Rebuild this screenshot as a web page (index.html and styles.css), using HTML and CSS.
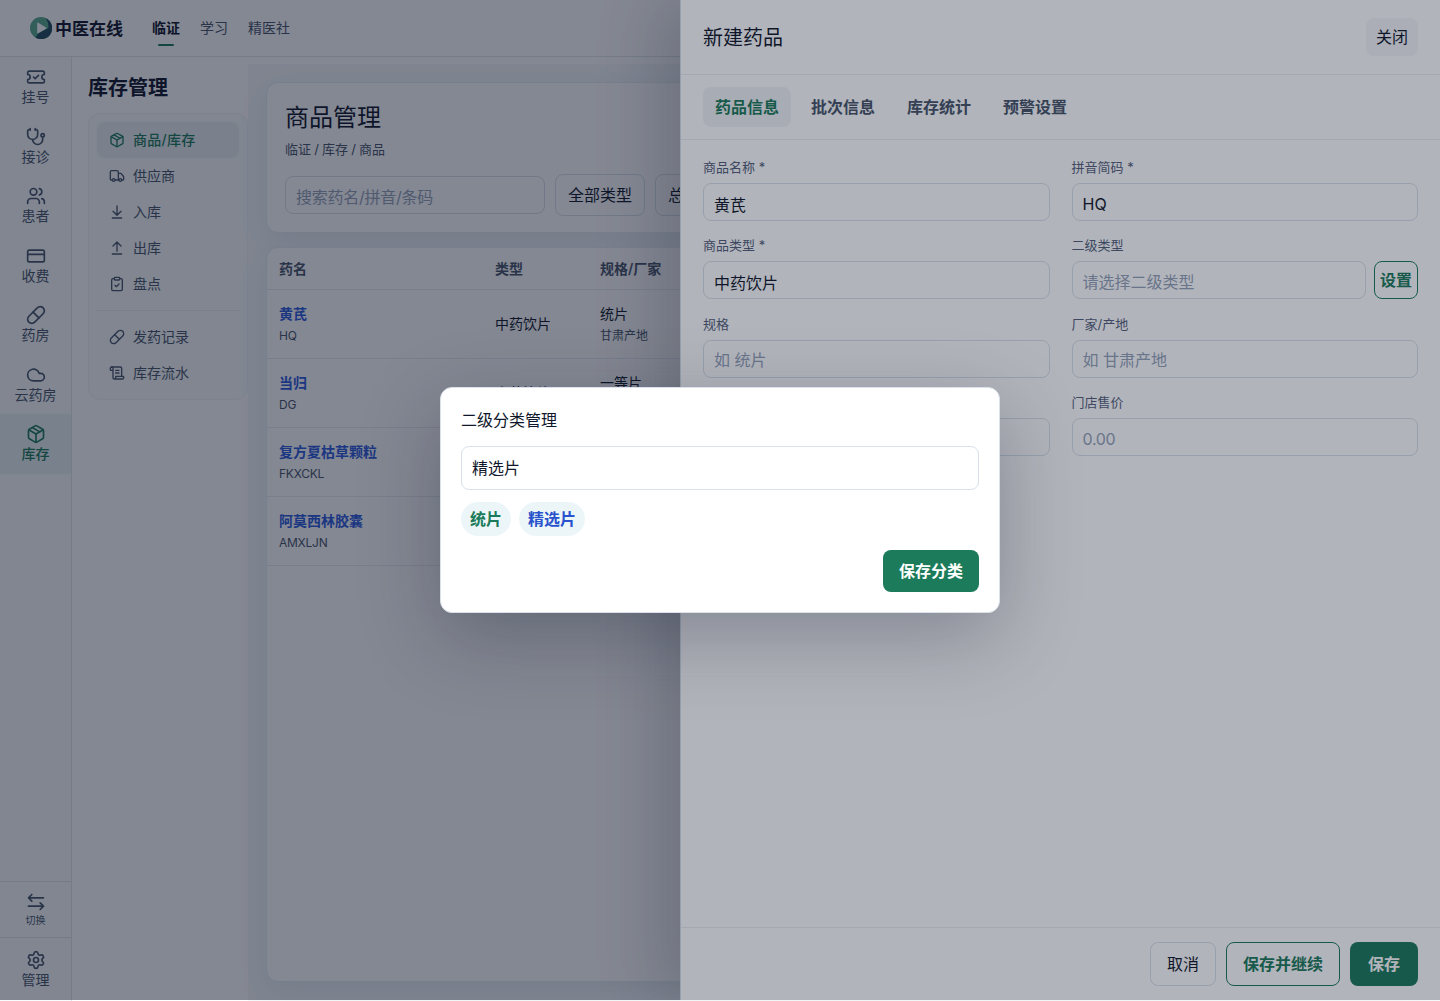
FILE: index.html
```html
<!DOCTYPE html>
<html lang="zh-CN">
<head>
    <meta charset="UTF-8">
    <meta name="viewport" content="width=device-width, initial-scale=1.0">
    <title>中医在线 - 库存管理</title>
    <link rel="stylesheet" href="styles.css">
</head>
<body>
    <!-- 图标 -->
    <svg class="icon-defs" width="0" height="0">
        <symbol id="i-ticket" viewBox="0 0 24 24"><path d="M2 9a3 3 0 1 1 0 6v2a2 2 0 0 0 2 2h16a2 2 0 0 0 2-2v-2a3 3 0 1 1 0-6V7a2 2 0 0 0-2-2H4a2 2 0 0 0-2 2Z"/><path d="m9 12 2 2 4-4"/></symbol>
        <symbol id="i-stethoscope" viewBox="0 0 24 24"><path d="M11 2v2M5 2v2M5 3H4a2 2 0 0 0-2 2v4a6 6 0 0 0 12 0V5a2 2 0 0 0-2-2h-1"/><path d="M8 15a6 6 0 0 0 12 0v-3"/><circle cx="20" cy="10" r="2"/></symbol>
        <symbol id="i-users" viewBox="0 0 24 24"><path d="M16 21v-2a4 4 0 0 0-4-4H6a4 4 0 0 0-4 4v2"/><circle cx="9" cy="7" r="4"/><path d="M22 21v-2a4 4 0 0 0-3-3.87M16 3.13a4 4 0 0 1 0 7.75"/></symbol>
        <symbol id="i-card" viewBox="0 0 24 24"><rect x="2" y="5" width="20" height="14" rx="2"/><path d="M2 10h20"/></symbol>
        <symbol id="i-pill" viewBox="0 0 24 24"><path d="m10.5 20.5 10-10a4.95 4.95 0 1 0-7-7l-10 10a4.95 4.95 0 1 0 7 7Z"/><path d="m8.5 8.5 7 7"/></symbol>
        <symbol id="i-cloud" viewBox="0 0 24 24"><path d="M17.5 19H9a7 7 0 1 1 6.71-9h1.79a4.5 4.5 0 1 1 0 9Z"/></symbol>
        <symbol id="i-package" viewBox="0 0 24 24"><path d="M11 21.73a2 2 0 0 0 2 0l7-4A2 2 0 0 0 21 16V8a2 2 0 0 0-1-1.73l-7-4a2 2 0 0 0-2 0l-7 4A2 2 0 0 0 3 8v8a2 2 0 0 0 1 1.73z"/><path d="M12 22V12"/><path d="M3.29 7 12 12l8.71-5"/><path d="m7.5 4.27 9 5.15"/></symbol>
        <symbol id="i-truck" viewBox="0 0 24 24"><path d="M14 18V6a2 2 0 0 0-2-2H4a2 2 0 0 0-2 2v11a1 1 0 0 0 1 1h2"/><path d="M15 18H9"/><path d="M19 18h2a1 1 0 0 0 1-1v-3.65a1 1 0 0 0-.22-.624l-3.48-4.35A1 1 0 0 0 17.52 8H14"/><circle cx="17" cy="18" r="2"/><circle cx="7" cy="18" r="2"/></symbol>
        <symbol id="i-in" viewBox="0 0 24 24"><path d="M12 17V3M6 11l6 6 6-6M19 21H5"/></symbol>
        <symbol id="i-out" viewBox="0 0 24 24"><path d="m18 9-6-6-6 6M12 3v14M5 21h14"/></symbol>
        <symbol id="i-check" viewBox="0 0 24 24"><rect x="8" y="2" width="8" height="4" rx="1"/><path d="M16 4h2a2 2 0 0 1 2 2v14a2 2 0 0 1-2 2H6a2 2 0 0 1-2-2V6a2 2 0 0 1 2-2h2"/><path d="m9 14 2 2 4-4"/></symbol>
        <symbol id="i-scroll" viewBox="0 0 24 24"><path d="M15 12h-5M15 8h-5M19 17V5a2 2 0 0 0-2-2H4"/><path d="M8 21h12a2 2 0 0 0 2-2v-1a1 1 0 0 0-1-1H11a1 1 0 0 0-1 1v1a2 2 0 1 1-4 0V5a2 2 0 1 0-4 0v2a1 1 0 0 0 1 1h3"/></symbol>
        <symbol id="i-swap" viewBox="0 0 24 24"><path d="M7 3 3 7l4 4M3 7h18M17 13l4 4-4 4M21 17H3"/></symbol>
        <symbol id="i-gear" viewBox="0 0 24 24"><path d="M9.671 4.136a2.34 2.34 0 0 1 4.659 0 2.34 2.34 0 0 0 3.319 1.915 2.34 2.34 0 0 1 2.33 4.033 2.34 2.34 0 0 0 0 3.831 2.34 2.34 0 0 1-2.33 4.033 2.34 2.34 0 0 0-3.319 1.915 2.34 2.34 0 0 1-4.659 0 2.34 2.34 0 0 0-3.32-1.915 2.34 2.34 0 0 1-2.33-4.033 2.34 2.34 0 0 0 0-3.831A2.34 2.34 0 0 1 6.35 6.051a2.34 2.34 0 0 0 3.319-1.915"/><circle cx="12" cy="12" r="3"/></symbol>
    </svg>

    <div class="app">
        <header class="topbar">
            <div class="brand">
                <svg class="brand-logo" viewBox="0 0 22 22">
                    <circle cx="11" cy="11" r="11" fill="#58a98a"/>
                    <path d="M16 1.2A11 11 0 1 1 5.5 20.5L8 16.5 18.5 11Q18.5 5 16 1.2Z" fill="#1f4a5c"/>
                    <path d="M7.2 6.3v9.4q0 1.2 1 .6l7.8-4.5q1-.7 0-1.4L8.2 5.7q-1-.5-1 .6Z" fill="#fff"/>
                </svg>
                <span class="brand-name">中医在线</span>
            </div>
            <nav class="topnav">
                <a class="active">临证</a>
                <a>学习</a>
                <a>精医社</a>
            </nav>
        </header>

        <div class="body">
            <aside class="rail">
                <a class="rail-item"><svg class="icon"><use href="#i-ticket"/></svg><span>挂号</span></a>
                <a class="rail-item"><svg class="icon"><use href="#i-stethoscope"/></svg><span>接诊</span></a>
                <a class="rail-item"><svg class="icon"><use href="#i-users"/></svg><span>患者</span></a>
                <a class="rail-item"><svg class="icon"><use href="#i-card"/></svg><span>收费</span></a>
                <a class="rail-item"><svg class="icon"><use href="#i-pill"/></svg><span>药房</span></a>
                <a class="rail-item"><svg class="icon"><use href="#i-cloud"/></svg><span>云药房</span></a>
                <a class="rail-item active"><svg class="icon"><use href="#i-package"/></svg><span>库存</span></a>
                <div class="rail-bottom">
                    <a class="rail-item switch"><svg class="icon"><use href="#i-swap"/></svg><span>切换</span></a>
                    <a class="rail-item manage"><svg class="icon"><use href="#i-gear"/></svg><span>管理</span></a>
                </div>
            </aside>

            <aside class="side">
                <h2>库存管理</h2>
                <nav class="menu">
                    <a class="menu-item active"><svg class="icon"><use href="#i-package"/></svg>商品/库存</a>
                    <a class="menu-item"><svg class="icon"><use href="#i-truck"/></svg>供应商</a>
                    <a class="menu-item"><svg class="icon"><use href="#i-in"/></svg>入库</a>
                    <a class="menu-item"><svg class="icon"><use href="#i-out"/></svg>出库</a>
                    <a class="menu-item"><svg class="icon"><use href="#i-check"/></svg>盘点</a>
                    <div class="menu-line"></div>
                    <a class="menu-item"><svg class="icon"><use href="#i-pill"/></svg>发药记录</a>
                    <a class="menu-item"><svg class="icon"><use href="#i-scroll"/></svg>库存流水</a>
                </nav>
            </aside>

            <main class="main">
                <section class="card page-head">
                    <h1>商品管理</h1>
                    <div class="crumb">临证 / 库存 / 商品</div>
                    <div class="toolbar">
                        <input class="input search" type="text" placeholder="搜索药名/拼音/条码">
                        <button class="btn filter">全部类型</button>
                        <button class="btn filter">总库存</button>
                    </div>
                </section>
                <section class="card table-card">
                    <table class="table">
                        <thead>
                            <tr><th class="col-name">药名</th><th class="col-type">类型</th><th>规格/厂家</th></tr>
                        </thead>
                        <tbody>
                            <tr>
                                <td class="two"><div class="link">黄芪</div><div class="sub code">HQ</div></td>
                                <td>中药饮片</td>
                                <td class="two"><div>统片</div><div class="sub">甘肃产地</div></td>
                            </tr>
                            <tr>
                                <td class="two"><div class="link">当归</div><div class="sub code">DG</div></td>
                                <td>中药饮片</td>
                                <td class="two"><div>一等片</div><div class="sub">&nbsp;</div></td>
                            </tr>
                            <tr>
                                <td class="two"><div class="link">复方夏枯草颗粒</div><div class="sub code">FKXCKL</div></td>
                                <td></td>
                                <td></td>
                            </tr>
                            <tr>
                                <td class="two"><div class="link">阿莫西林胶囊</div><div class="sub code">AMXLJN</div></td>
                                <td></td>
                                <td></td>
                            </tr>
                        </tbody>
                    </table>
                </section>
            </main>
        </div>
    </div>

    <!-- 新建药品抽屉 -->
    <div class="drawer-mask">
        <section class="drawer">
            <header class="drawer-head">
                <h3>新建药品</h3>
                <button class="close">关闭</button>
            </header>
            <nav class="tabs">
                <button class="tab active">药品信息</button>
                <button class="tab">批次信息</button>
                <button class="tab">库存统计</button>
                <button class="tab">预警设置</button>
            </nav>
            <form class="form">
                <label class="field"><span>商品名称 *</span><input class="input" type="text" value="黄芪"></label>
                <label class="field"><span>拼音简码 *</span><input class="input" type="text" value="HQ"></label>
                <label class="field"><span>商品类型 *</span><input class="input" type="text" value="中药饮片"></label>
                <div class="field">
                    <span>二级类型</span>
                    <div class="with-btn">
                        <input class="input" type="text" placeholder="请选择二级类型">
                        <button type="button" class="btn outline setting">设置</button>
                    </div>
                </div>
                <label class="field"><span>规格</span><input class="input" type="text" placeholder="如 统片"></label>
                <label class="field"><span>厂家/产地</span><input class="input" type="text" placeholder="如 甘肃产地"></label>
                <label class="field"><span>&nbsp;</span><input class="input" type="text"></label>
                <label class="field"><span>门店售价</span><input class="input price" type="text" placeholder="0.00"></label>
            </form>
            <footer class="drawer-foot">
                <button class="btn">取消</button>
                <button class="btn outline">保存并继续</button>
                <button class="btn primary foot-save">保存</button>
            </footer>
        </section>
    </div>

    <!-- 二级分类弹窗 -->
    <div class="modal-mask">
        <section class="modal">
            <h4>二级分类管理</h4>
            <input class="input" type="text" value="精选片">
            <div class="chips">
                <span class="chip">统片</span>
                <span class="chip current">精选片</span>
            </div>
            <button class="btn primary modal-save">保存分类</button>
        </section>
    </div>
</body>
</html>
```
FILE: styles.css
```css
:root {
    --green: #1b7b5a;
    --blue: #2952cc;
    --text: #0f172a;
    --muted: #475569;
    --placeholder: #94a3b8;
    --line: #d9e2ea;
    --line-soft: #e6edf2;
    --soft: #f8fcfc;
    --mint: #ecf6f9;
}

* {
    box-sizing: border-box;
    margin: 0;
    padding: 0;
}

body {
    height: 1001px;
    overflow: hidden;
    position: relative;
    font-family: Inter, "Noto Sans CJK SC", sans-serif;
    font-size: 14px;
    line-height: 1.4;
    color: var(--text);
    background: #fff;
}

h1, h2, h3, h4 {
    font-weight: 400;
}

button, input {
    font-family: inherit;
    font-size: 16px;
    color: var(--text);
}

.icon-defs {
    position: absolute;
}

.icon {
    width: 20px;
    height: 20px;
    flex: none;
    fill: none;
    stroke: currentColor;
    stroke-width: 2;
    stroke-linecap: round;
    stroke-linejoin: round;
}

.app {
    height: 1001px;
    display: flex;
    flex-direction: column;
}

/* 顶部导航 */
.topbar {
    height: 57px;
    flex: none;
    display: flex;
    align-items: center;
    gap: 29px;
    padding-left: 30px;
    border-bottom: 1px solid #dfe6ec;
}

.brand {
    display: flex;
    align-items: center;
    gap: 3px;
}

.brand-logo {
    width: 22px;
    height: 22px;
}

.brand-name {
    padding-top: 2px;
    font-size: 17px;
    font-weight: 700;
    line-height: 24px;
}

.topnav {
    display: flex;
    gap: 20px;
    color: var(--muted);
}

.topnav a {
    position: relative;
}

.topnav .active {
    font-weight: 700;
    color: var(--text);
}

.topnav .active::after {
    content: "";
    position: absolute;
    left: 6px;
    bottom: -8px;
    width: 16px;
    height: 2px;
    border-radius: 1px;
    background: var(--green);
}

.body {
    flex: 1;
    display: flex;
    min-height: 0;
}

/* 左侧主菜单 */
.rail {
    width: 72px;
    flex: none;
    display: flex;
    flex-direction: column;
    border-right: 1px solid #dfe6ec;
    background: var(--soft);
    color: var(--muted);
}

.rail-item {
    display: flex;
    flex-direction: column;
    align-items: center;
    padding: 10px 0;
    line-height: 19.5px;
}

.rail-item.active {
    background: #e7f1f1;
    color: var(--green);
    font-weight: 500;
}

.rail-bottom {
    margin-top: auto;
    padding-bottom: 1px;
}

.rail-bottom .rail-item {
    border-top: 1px solid #dfe6ec;
}

.rail-item.switch {
    height: 56px;
    font-size: 10px;
    line-height: 16px;
}

.rail-item.manage {
    height: 63px;
    padding-top: 12px;
}

/* 二级菜单 */
.side {
    width: 176px;
    flex: none;
    padding: 17px 0 0 16px;
}

.side h2 {
    font-size: 20px;
    font-weight: 700;
    line-height: 28px;
    margin-bottom: 11px;
}

.menu {
    padding: 8px;
    border: 1px solid #edf2f5;
    border-radius: 12px;
    background: var(--soft);
    color: var(--muted);
}

.menu-item {
    height: 36px;
    display: flex;
    align-items: center;
    gap: 8px;
    padding: 0 12px;
    border-radius: 8px;
}

.menu-item .icon {
    width: 16px;
    height: 16px;
}

.menu-item.active {
    background: #ebf2f3;
    color: var(--green);
    font-weight: 500;
    letter-spacing: 0.3px;
}

.menu-line {
    height: 1px;
    margin: 8px 0;
    background: #e8eef2;
}

/* 内容区 */
.main {
    flex: 1;
    min-width: 0;
    margin-top: 7px;
    padding: 18px 18px 19px;
    display: flex;
    flex-direction: column;
    gap: 14px;
    background: #f5f9fa;
}

.card {
    border: 1px solid var(--line-soft);
    border-radius: 12px;
    background: #fff;
    box-shadow: 0 10px 30px rgba(15, 60, 80, 0.08);
}

.page-head {
    padding: 18px 18px 16px;
}

.page-head h1 {
    font-size: 24px;
    line-height: 34px;
}

.crumb {
    margin-top: 4px;
    font-size: 13px;
    line-height: 20px;
    word-spacing: -0.5px;
    color: var(--muted);
}

.toolbar {
    display: flex;
    align-items: center;
    gap: 10px;
    margin-top: 15px;
}

.input {
    width: 100%;
    height: 38px;
    padding: 3px 10px 0;
    border: 1px solid var(--line);
    border-radius: 8px;
    background: #fff;
    outline: none;
}

.input::placeholder {
    color: var(--placeholder);
}

.search {
    width: 260px;
    letter-spacing: -0.25px;
}

.price {
    letter-spacing: -0.3px;
}

.btn {
    height: 44px;
    padding: 0 16px 2px;
    border: 1px solid var(--line);
    border-radius: 8px;
    background: #fff;
    white-space: nowrap;
}

.btn.outline {
    border-color: var(--green);
    color: var(--green);
    font-weight: 600;
}

.btn.primary {
    border: 0;
    background: var(--green);
    color: #fff;
    font-weight: 700;
}

.btn.filter {
    height: 42px;
    padding: 0 12px 2px;
}

.table-card {
    flex: 1;
    overflow: hidden;
}

.table {
    width: 100%;
    border-collapse: separate;
    border-spacing: 0;
    table-layout: fixed;
}

.table th {
    height: 42px;
    padding: 0 12px;
    text-align: left;
    font-weight: 600;
    color: var(--muted);
    border-bottom: 1px solid var(--line-soft);
}

.table td {
    height: 69px;
    padding: 0 12px;
    line-height: 22px;
    border-bottom: 1px solid var(--line-soft);
}

.table td.two {
    padding-top: 2px;
}

.col-name {
    width: 216px;
}

.col-type {
    width: 105px;
}

.link {
    font-weight: 700;
    color: #2c5bdc;
}

.sub {
    font-size: 12px;
    color: var(--muted);
}

.code {
    letter-spacing: -0.25px;
}

/* 抽屉 */
.drawer-mask,
.modal-mask {
    position: absolute;
    top: 0;
    left: 0;
    width: 100%;
    height: 1000px;
    display: flex;
    overflow: hidden;
}

.drawer-mask {
    justify-content: flex-end;
    background: rgba(15, 23, 42, 0.28);
}

.drawer {
    width: 760px;
    display: flex;
    flex-direction: column;
    border-left: 1px solid var(--line);
    background: #fff;
    box-shadow: -20px 0 60px rgba(15, 23, 42, 0.2);
}

.drawer-head {
    height: 75px;
    display: flex;
    align-items: center;
    justify-content: space-between;
    padding: 0 22px;
    border-bottom: 1px solid #e8eff3;
}

.drawer-head h3 {
    padding-top: 1px;
    font-size: 20px;
}

.close {
    height: 38px;
    padding: 0 10px 2px;
    border: 0;
    border-radius: 8px;
    background: #f6f7f9;
}

.tabs {
    display: flex;
    gap: 8px;
    padding: 12px 22px;
    border-bottom: 1px solid #e8eff3;
}

.tab {
    height: 40px;
    padding: 0 12px 2px;
    border: 0;
    border-radius: 8px;
    background: none;
    color: var(--muted);
    font-weight: 600;
}

.tab.active {
    background: #f0f3f5;
    color: var(--green);
}

.form {
    flex: 1;
    display: grid;
    grid-template-columns: 1fr 1fr;
    align-content: start;
    gap: 15.4px 22px;
    padding: 18px 22px;
}

.field {
    display: flex;
    flex-direction: column;
    gap: 6px;
    font-size: 13px;
    line-height: 19px;
    color: #53617a;
}

.with-btn {
    display: flex;
    gap: 8px;
}

.btn.setting {
    height: 38px;
    width: 44px;
    flex: none;
    padding: 0 0 2px;
}

.drawer-foot {
    display: flex;
    justify-content: flex-end;
    gap: 10px;
    padding: 14px 22px;
    border-top: 1px solid #e8eff3;
}

.btn.foot-save {
    padding: 0 18px 2px;
}

/* 弹窗 */
.modal-mask {
    align-items: center;
    justify-content: center;
    background: rgba(15, 23, 42, 0.32);
}

.modal {
    width: 560px;
    display: flex;
    flex-direction: column;
    padding: 20px;
    border: 1px solid var(--line);
    border-radius: 12px;
    background: #fff;
    box-shadow: 0 24px 80px rgba(15, 23, 42, 0.28);
}

.modal h4 {
    font-size: 16px;
    line-height: 24px;
    margin-bottom: 14px;
}

.modal .input {
    height: 44px;
    padding: 0 10px 2px;
}

.chips {
    display: flex;
    gap: 8px;
    margin: 12px 0 14px;
}

.chip {
    height: 34px;
    padding: 0 9px;
    border-radius: 17px;
    background: var(--mint);
    color: var(--green);
    font-size: 16px;
    font-weight: 600;
    line-height: 34px;
}

.chip.current {
    color: var(--blue);
}

.modal-save {
    align-self: flex-end;
    height: 42px;
}
```
